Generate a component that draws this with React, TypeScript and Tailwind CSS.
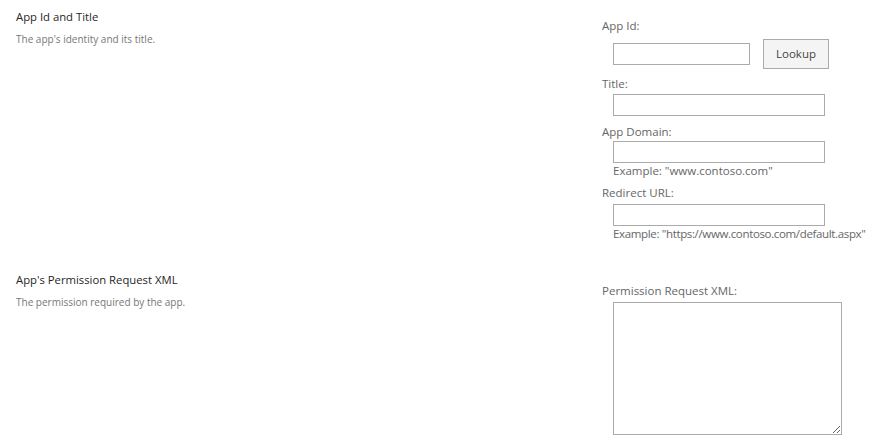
import * as React from "react";

const font = "font-['Segoe_UI','Open_Sans',sans-serif]";

const Label = ({ text, className = "" }: { text: string; className?: string }) => (
  <div className={`whitespace-nowrap text-[11.5px] leading-[16px] text-[#666666] ${className}`}>{text}</div>
);

const Hint = ({ text, className = "" }: { text: string; className?: string }) => (
  <div className={`ml-[11px] whitespace-nowrap text-[11.5px] leading-[16px] text-[#666666] ${className}`}>{text}</div>
);

const TextBox = ({ width, className = "" }: { width: string; className?: string }) => (
  <input
    type="text"
    className={`ml-[11px] block h-[22px] ${width} border border-[#ababab] bg-white px-1 text-[12px] outline-none ${className}`}
  />
);

const SectionHead = ({ title, desc, className = "" }: { title: string; desc: string; className?: string }) => (
  <div className={`w-[588px] shrink-0 pl-4 ${className}`}>
    <h3 className="whitespace-nowrap text-[11.3px] leading-[16px] text-[#262626]">{title}</h3>
    <p className="mt-[7px] whitespace-nowrap text-[10px] leading-[14px] text-[#777777]">{desc}</p>
  </div>
);

export default function App() {
  return (
    <div className={`${font} h-[446px] w-[879px] overflow-hidden bg-white`}>
      {/* app id, title, domain, redirect */}
      <div className="flex">
        <SectionHead title="App Id and Title" desc="The app's identity and its title." className="pt-[9px]" />
        <div className="w-[277px] shrink-0 pl-[14px] pt-[18px]">
          <Label text="App Id:" />
          <div className="mt-[5px] flex items-center">
            <TextBox width="w-[137px]" />
            <button className="ml-[13px] h-[30px] w-[66px] border border-[#ababab] bg-[#f4f4f4] text-[11.5px] text-[#444444]">
              Lookup
            </button>
          </div>
          <Label text="Title:" className="mt-[7px]" />
          <TextBox width="w-[212px]" className="mt-[2px]" />
          <Label text="App Domain:" className="mt-[8px]" />
          <TextBox width="w-[212px]" className="mt-[1px]" />
          <Hint text={'Example: "www.contoso.com"'} />
          <Label text="Redirect URL:" className="mt-[6px]" />
          <TextBox width="w-[212px]" className="mt-[3px]" />
          <Hint text={'Example: "https://www.contoso.com/default.aspx"'} className="tracking-[-0.35px]" />
        </div>
      </div>

      {/* permission request xml */}
      <div className="flex">
        <SectionHead
          title="App's Permission Request XML"
          desc="The permission required by the app."
          className="pt-[30px]"
        />
        <div className="w-[277px] shrink-0 pl-[14px] pt-[41px]">
          <Label text="Permission Request XML:" />
          <textarea className="ml-[11px] mt-[3px] block h-[133px] w-[229px] border border-[#ababab] bg-white outline-none" />
        </div>
      </div>
    </div>
  );
}
